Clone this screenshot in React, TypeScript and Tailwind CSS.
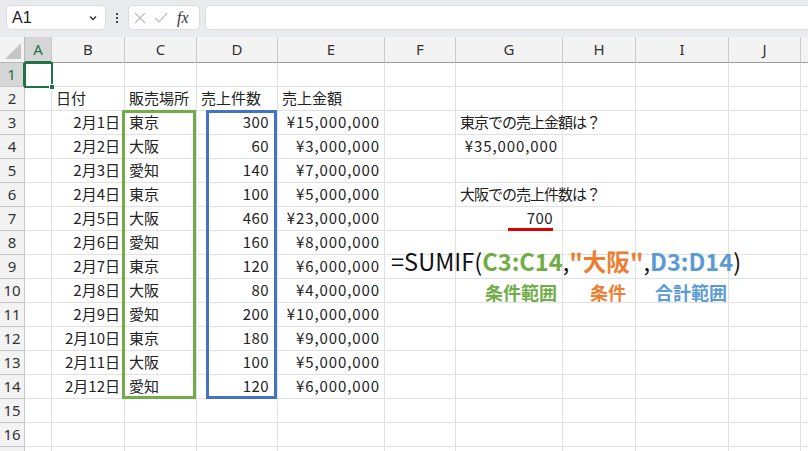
import React from 'react';

const cols = ['A', 'B', 'C', 'D', 'E', 'F', 'G', 'H', 'I', 'J', ''];

const data: [string, string, string, string][] = [
  ['2月1日', '東京', '300', '¥15,000,000'],
  ['2月2日', '大阪', '60', '¥3,000,000'],
  ['2月3日', '愛知', '140', '¥7,000,000'],
  ['2月4日', '東京', '100', '¥5,000,000'],
  ['2月5日', '大阪', '460', '¥23,000,000'],
  ['2月6日', '愛知', '160', '¥8,000,000'],
  ['2月7日', '東京', '120', '¥6,000,000'],
  ['2月8日', '大阪', '80', '¥4,000,000'],
  ['2月9日', '愛知', '200', '¥10,000,000'],
  ['2月10日', '東京', '180', '¥9,000,000'],
  ['2月11日', '大阪', '100', '¥5,000,000'],
  ['2月12日', '愛知', '120', '¥6,000,000'],
];

type Cell = { text?: string; align?: 'l' | 'r'; extra?: string };

function rowCells(r: number): Cell[] {
  const cells: Cell[] = Array.from({ length: 11 }, () => ({}));
  if (r === 2) {
    cells[1] = { text: '日付' };
    cells[2] = { text: '販売場所' };
    cells[3] = { text: '売上件数' };
    cells[4] = { text: '売上金額' };
  }
  if (r >= 3 && r <= 14) {
    const d = data[r - 3];
    cells[1] = { text: d[0], align: 'r' };
    cells[2] = { text: d[1] };
    cells[3] = { text: d[2], align: 'r', extra: 'pr-[8px] tracking-[0.4px]' };
    cells[4] = { text: d[3], align: 'r', extra: 'tracking-[0.9px]' };
  }
  if (r === 3) cells[6] = { text: '東京での売上金額は？', extra: 'overflow-visible whitespace-nowrap tracking-[-1px]' };
  if (r === 4) cells[6] = { text: '¥35,000,000', align: 'r', extra: 'tracking-[0.9px]' };
  if (r === 6) cells[6] = { text: '大阪での売上件数は？', extra: 'overflow-visible whitespace-nowrap tracking-[-1px]' };
  if (r === 7) cells[6] = { text: '700', align: 'r', extra: 'pr-[9px] tracking-[0.4px]' };
  return cells;
}

function SelectAll() {
  return (
    <svg width="25" height="26" viewBox="0 0 25 26">
      <polygon points="5,22 21,22 21,6" fill="#c6c6c6" />
    </svg>
  );
}

export default function App() {
  const rows = Array.from({ length: 17 }, (_, i) => i + 1);
  return (
    <div
      className="relative w-[808px] h-[451px] overflow-hidden bg-white text-[#222]"
      style={{ fontFamily: '"Noto Sans CJK JP", "Noto Sans", sans-serif' }}
    >
      {/* formula bar */}
      <div className="h-[37px] bg-[#e9ebee] flex items-start pt-[5px] pl-[6px]">
        <div className="w-[100px] h-[25px] bg-white rounded-[5px] border border-[#dcdde0] flex items-center justify-between pl-[5px] pr-[7px] text-[16px]">
          <span style={{ fontFamily: '"Liberation Sans", sans-serif' }}>A1</span>
          <svg width="10" height="10" viewBox="0 0 10 10">
            <path d="M2 3.5 L5 6.5 L8 3.5" fill="none" stroke="#333" strokeWidth="1.4" />
          </svg>
        </div>
        <div className="w-[22px] h-[25px] flex flex-col items-center justify-center gap-[2px]">
          <span className="w-[2px] h-[2px] bg-[#444]" />
          <span className="w-[2px] h-[2px] bg-[#444]" />
          <span className="w-[2px] h-[2px] bg-[#444]" />
        </div>
        <div className="w-[72px] h-[25px] bg-white rounded-[5px] border border-[#dcdde0] flex items-center pl-[5px] gap-[8px]">
          <svg width="12" height="12" viewBox="0 0 12 12">
            <path d="M1 1 L11 11 M11 1 L1 11" stroke="#bdbdbd" strokeWidth="1.2" />
          </svg>
          <svg width="14" height="12" viewBox="0 0 14 12">
            <path d="M1 6 L5 10 L13 1" fill="none" stroke="#bdbdbd" strokeWidth="1.2" />
          </svg>
          <span
            className="italic text-[16px] text-[#333] leading-none ml-[1px]"
            style={{ fontFamily: '"Liberation Serif", serif' }}
          >
            fx
          </span>
        </div>
        <div className="flex-1 ml-[5px] h-[25px] bg-white rounded-l-[5px] border border-r-0 border-[#dcdde0]" />
      </div>

      {/* sheet */}
      <div className="grid grid-cols-[25px_27px_73px_72px_81px_107px_71px_107px_73px_93px_72px_1fr] grid-rows-[26px] auto-rows-[24px] text-[15px]">
        <div className="bg-[#f3f3f3] border-r border-b border-[#b8b8b8]">
          <SelectAll />
        </div>
        {cols.map((c, i) => (
          <div
            key={c + i}
            className={
              i === 0
                ? 'bg-[#d6d6d6] border-r border-[#c6c6c6] border-b-2 border-b-[#217346] text-[#217346] flex items-center justify-center'
                : 'bg-[#f3f3f3] border-r border-[#c9c9c9] border-b border-b-[#9b9b9b] text-[#333] flex items-center justify-center'
            }
            style={{ fontFamily: '"Noto Sans", sans-serif' }}
          >
            {c}
          </div>
        ))}
        {rows.map((r) => (
          <React.Fragment key={r}>
            <div
              className={
                r === 1
                  ? 'bg-[#d6d6d6] border-r-2 border-r-[#217346] border-b border-[#c6c6c6] text-[#217346] flex items-center justify-center'
                  : 'bg-[#f3f3f3] border-r border-b border-[#c6c6c6] text-[#333] flex items-center justify-center'
              }
              style={{ fontFamily: '"Noto Sans", sans-serif' }}
            >
              {r < 17 ? r : ''}
            </div>
            {rowCells(r).map((cell, ci) => (
              <div
                key={ci}
                className={`border-r border-b border-[#e1e1e1] flex items-center px-[4px] ${
                  cell.align === 'r' ? 'justify-end' : 'justify-start'
                } ${cell.extra ?? ''} ${cell.extra?.includes('overflow-visible') ? '' : 'overflow-hidden whitespace-nowrap'}`}
              >
                {cell.text}
              </div>
            ))}
          </React.Fragment>
        ))}
      </div>

      {/* active cell A1 */}
      <div className="absolute left-[24px] top-[62px] w-[29px] h-[26px] border-2 border-[#217346]">
        <div className="absolute right-[-4px] bottom-[-4px] w-[6px] h-[6px] bg-[#217346] border border-white" />
      </div>

      {/* highlighted ranges */}
      <div className="absolute left-[122px] top-[110px] w-[74px] h-[289px] border-[3px] border-[#70ad47]" />
      <div className="absolute left-[206px] top-[110px] w-[71px] h-[289px] border-[3px] border-[#4472c4]" />

      {/* red underline */}
      <div className="absolute left-[508px] top-[228px] w-[45px] h-[3px] bg-[#e00000]" />

      {/* formula annotation */}
      <div className="absolute left-[391px] top-[246px] text-[23.6px] leading-[30px] whitespace-nowrap text-[#111]">
        =SUMIF(<span className="font-bold text-[#70ad47]">C3:C14</span>,
        <span className="font-bold text-[#ed7d31]">"大阪"</span>,
        <span className="font-bold text-[#5b9bd5]">D3:D14</span>)
      </div>
      <div className="absolute left-[485px] top-[280px] text-[18px] leading-[24px] font-bold text-[#70ad47]">条件範囲</div>
      <div className="absolute left-[590px] top-[280px] text-[18px] leading-[24px] font-bold text-[#ed7d31]">条件</div>
      <div className="absolute left-[655px] top-[280px] text-[18px] leading-[24px] font-bold text-[#5b9bd5]">合計範囲</div>
    </div>
  );
}
